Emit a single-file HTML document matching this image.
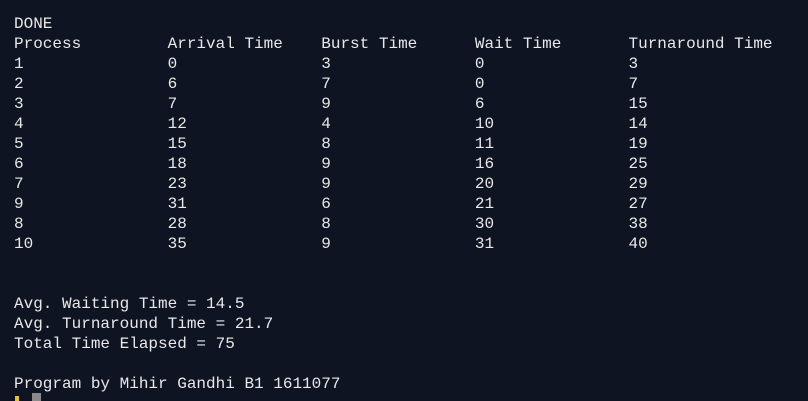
<!DOCTYPE html>
<html><head><meta charset="utf-8"><style>
html,body{margin:0;padding:0;width:808px;height:401px;overflow:hidden;background:#0f1423;}
pre{margin:0;position:absolute;left:14px;top:14px;font-family:"Liberation Mono",monospace;font-size:16px;line-height:20px;color:#e8e8e8;white-space:pre;}
.c1{position:absolute;left:15px;top:396px;width:4px;height:5px;background:#e8c230;}
.c2{position:absolute;left:32px;top:393px;width:9px;height:8px;background:#8a8a8a;}
</style></head><body>
<pre>DONE
Process         Arrival Time    Burst Time      Wait Time       Turnaround Time
1               0               3               0               3
2               6               7               0               7
3               7               9               6               15
4               12              4               10              14
5               15              8               11              19
6               18              9               16              25
7               23              9               20              29
9               31              6               21              27
8               28              8               30              38
10              35              9               31              40


Avg. Waiting Time = 14.5
Avg. Turnaround Time = 21.7
Total Time Elapsed = 75

Program by Mihir Gandhi B1 1611077</pre>
<div class="c1"></div><div class="c2"></div>
</body></html>
